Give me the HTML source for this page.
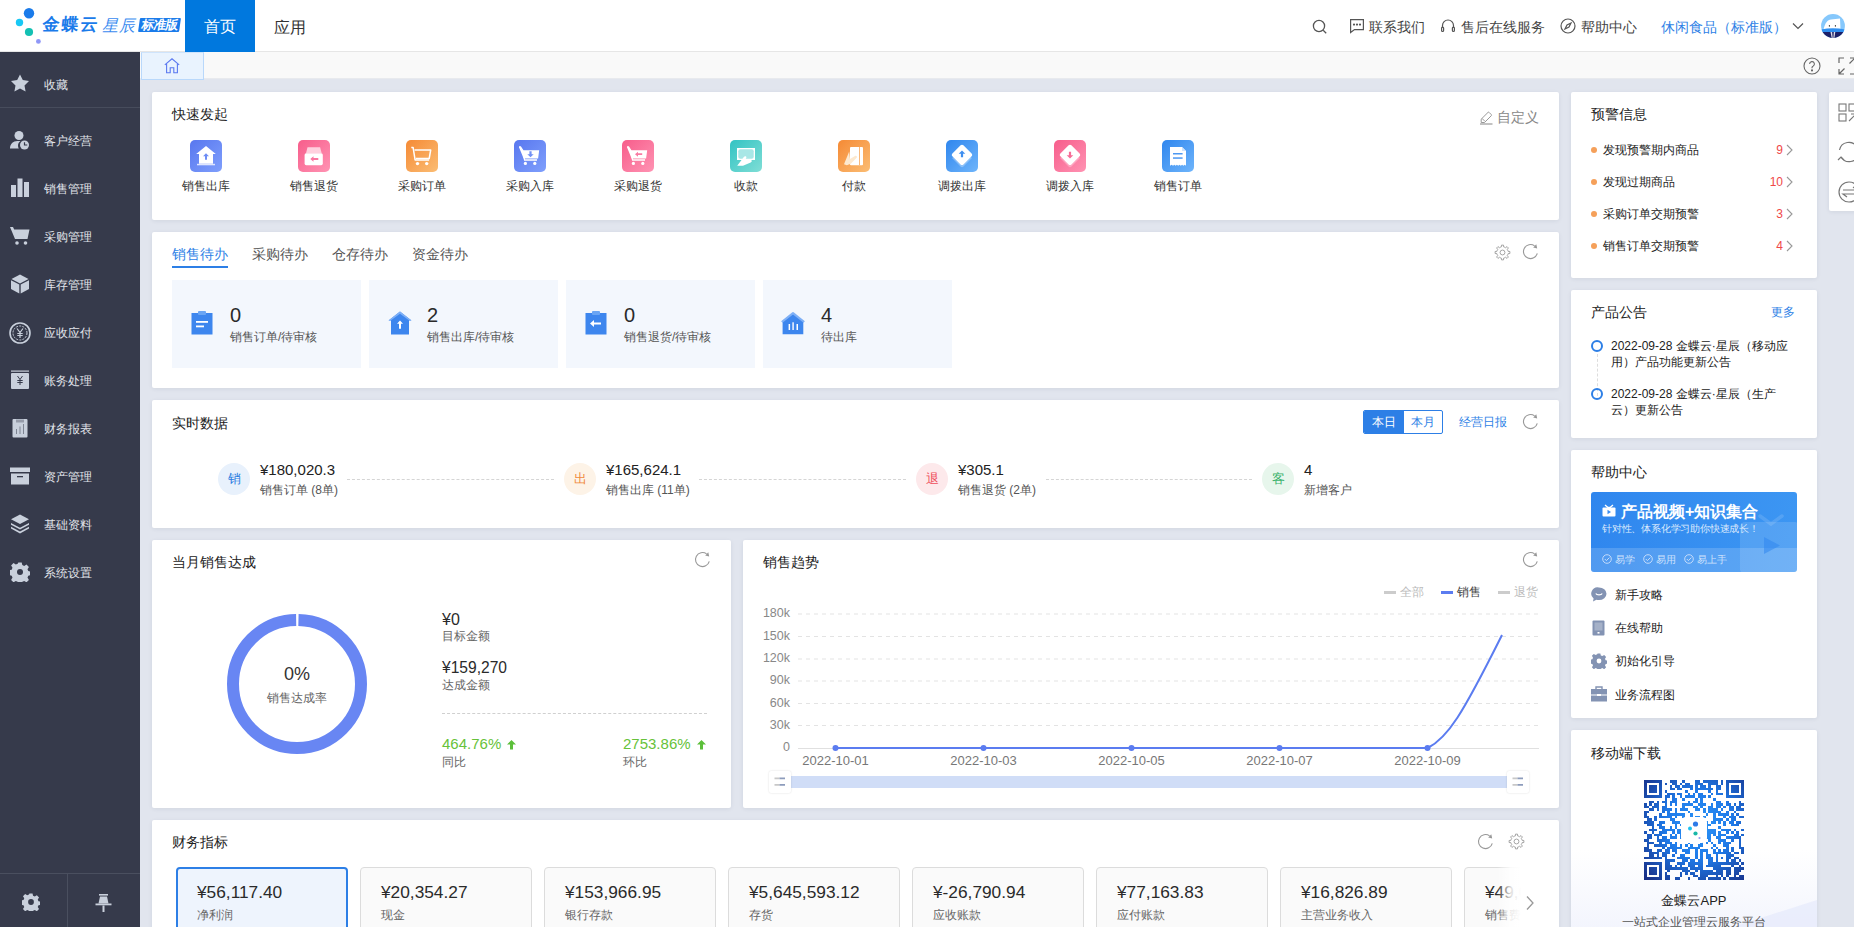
<!DOCTYPE html>
<html><head><meta charset="utf-8">
<style>
*{box-sizing:border-box;margin:0;padding:0}
html,body{width:1854px;height:927px;overflow:hidden}
body{position:relative;background:#e1e5ee;font-family:"Liberation Sans",sans-serif;color:#333;font-size:12px}
.a{position:absolute}
.hdr{left:0;top:0;width:1854px;height:52px;background:#fff;border-bottom:1px solid #e6e6e6}
.side{left:0;top:52px;width:140px;height:875px;background:#363a4b}
.si{position:absolute;left:0;width:140px;height:20px;color:#e1e4ea;font-size:12px;line-height:20px}
.si span{position:absolute;left:43.5px;top:0.8px;font-size:12.2px}
.si svg{position:absolute;left:10px;top:0px}
.tabbar{left:140px;top:52px;width:1714px;height:27px;background:#f9f9f9;border-bottom:1px solid #e8eaee}
.card{position:absolute;background:#fff;border-radius:2px;box-shadow:0 1px 4px rgba(30,40,70,.08)}
.ttl{position:absolute;left:20px;font-size:14px;color:#222;line-height:20px}
.ql{position:absolute;top:48px;width:70px;text-align:center;font-size:12px;color:#333}
.ql svg{display:block;margin:0 auto 6px}
.ql{line-height:16px}
</style></head><body>
<!-- header -->
<div class="a hdr">
 <svg class="a" style="left:0;top:0" width="44" height="52" viewBox="0 0 44 52">
  <circle cx="29" cy="13.3" r="5.2" fill="#1a7bea"/>
  <circle cx="19.5" cy="22.5" r="3.7" fill="#18c8f5"/>
  <circle cx="29" cy="32" r="4.1" fill="#13c0b3"/>
  <circle cx="38.4" cy="41.4" r="2.4" fill="#8f97f7"/>
 </svg>
 <div class="a" style="left:43px;top:15px;font-size:17px;line-height:20px;color:#1a7bea;font-weight:bold;letter-spacing:2px;transform:skewX(-6deg)">金蝶云</div>
 <div class="a" style="left:102px;top:16px;font-size:16px;line-height:20px;color:#3b8cf0;font-style:italic;letter-spacing:1px">星辰</div>
 <div class="a" style="left:139px;top:18px;width:41px;height:14px;background:#1a7bea;transform:skewX(-8deg);border-radius:1px"></div>
 <div class="a" style="left:139px;top:17px;width:42px;font-size:12.5px;line-height:16px;color:#fff;font-weight:bold;text-align:center;letter-spacing:-0.6px;transform:skewX(-10deg)">标准版</div>
 <div class="a" style="left:185px;top:0;width:70px;height:52px;background:#0078de;color:#fff;font-size:16px;line-height:54px;text-align:center">首页</div>
 <div class="a" style="left:255px;top:1px;width:70px;height:52px;color:#333;font-size:16px;line-height:54px;text-align:center">应用</div>
 <svg class="a" style="left:1312px;top:19px" width="16" height="16" viewBox="0 0 16 16" fill="none" stroke="#555" stroke-width="1.3"><circle cx="7" cy="7" r="5.6"/><path d="M11.2 11.2L14.2 14.2"/></svg>
 <svg class="a" style="left:1349px;top:18px" width="16" height="16" viewBox="0 0 16 16" fill="none" stroke="#555" stroke-width="1.2"><path d="M1.6 1.6h12.8v10H5.5L1.6 14.6z"/><circle cx="5" cy="6.6" r=".5" fill="#555"/><circle cx="8" cy="6.6" r=".5" fill="#555"/><circle cx="11" cy="6.6" r=".5" fill="#555"/></svg>
 <div class="a" style="left:1369px;top:17px;font-size:14px;line-height:20px;color:#444">联系我们</div>
 <svg class="a" style="left:1440px;top:18px" width="16" height="16" viewBox="0 0 16 16" fill="none" stroke="#555" stroke-width="1.2"><path d="M2.5 10V7.5a5.5 5.5 0 0 1 11 0V10"/><rect x="1.6" y="9" width="2" height="4.5" rx="1"/><rect x="12.4" y="9" width="2" height="4.5" rx="1"/></svg>
 <div class="a" style="left:1461px;top:17px;font-size:14px;line-height:20px;color:#444">售后在线服务</div>
 <svg class="a" style="left:1560px;top:18px" width="16" height="16" viewBox="0 0 16 16" fill="none" stroke="#555" stroke-width="1.2"><circle cx="8" cy="8" r="7"/><path d="M11 5L9 9 5 11 7 7z"/></svg>
 <div class="a" style="left:1581px;top:17px;font-size:14px;line-height:20px;color:#444">帮助中心</div>
 <div class="a" style="left:1661px;top:17px;font-size:14px;line-height:20px;color:#2d7fe6">休闲食品（标准版）</div>
 <svg class="a" style="left:1792px;top:20px" width="12" height="12" viewBox="0 0 12 12" fill="none" stroke="#555" stroke-width="1.2"><path d="M1 3.5l5 5 5-5"/></svg>
 <svg class="a" style="left:1821px;top:14px" width="24" height="24" viewBox="0 0 24 24">
  <defs><clipPath id="av"><circle cx="12" cy="12" r="11.9"/></clipPath></defs>
  <g clip-path="url(#av)"><rect width="24" height="24" fill="#86c8fc"/><path d="M2.5 15.5C4 9 6.5 6 10 5.6L19 4.6 19.5 15z" fill="#fff"/><path d="M0 15.5Q12 13 24 15.5V18.5H0z" fill="#2f8ff0"/><rect x="0" y="18" width="24" height="7" fill="#1c2068"/><path d="M9.5 18l1.2 6h1l-.6-6zM12.8 18l-.4 6h1l.9-6z" fill="#fff" opacity=".85"/></g>
  <ellipse cx="8.4" cy="11.8" rx=".6" ry=".9" fill="#333"/><ellipse cx="14.4" cy="11.8" rx=".6" ry=".9" fill="#333"/>
 </svg>
</div>
<div class="a side">
 <div class="si" style="top:22px"><svg width="20" height="18" viewBox="0 0 20 18"><path d="M10 0.5l2.8 5.6 6.2.9-4.5 4.4 1.1 6.1L10 14.6l-5.6 2.9 1.1-6.1L1 7l6.2-.9z" fill="#c9d0dc"/></svg><span>收藏</span></div>
 <div class="a" style="left:0;top:55px;width:140px;height:1px;background:#474c5c"></div>
 <div class="si" style="top:78px"><svg width="20" height="20" viewBox="0 0 20 20"><circle cx="9" cy="5.5" r="4.5" fill="#c9d0dc"/><path d="M0 18.5c0-4.5 3-7.5 7.5-7.5h3c-1.6 1-2.5 2.8-2.5 4.7 0 1.1.3 2 .8 2.8z" fill="#c9d0dc"/><circle cx="14.5" cy="15" r="4.5" fill="#c9d0dc"/><path d="M14.5 12.2v2.8h2.8" stroke="#363a4b" stroke-width="1.2" fill="none"/></svg><span>客户经营</span></div>
 <div class="si" style="top:126px"><svg width="20" height="20" viewBox="0 0 20 20"><rect x="1" y="7" width="5" height="12" fill="#c9d0dc"/><rect x="7.5" y="0.5" width="5" height="18.5" fill="#c9d0dc"/><rect x="14" y="4" width="5" height="15" fill="#c9d0dc"/></svg><span>销售管理</span></div>
 <div class="si" style="top:174px"><svg width="20" height="20" viewBox="0 0 20 20"><path d="M0 1h3l1.2 2.5H19.5l-2 9.5H5z" fill="#c9d0dc"/><circle cx="7" cy="17" r="1.8" fill="#c9d0dc"/><circle cx="15.5" cy="17" r="1.8" fill="#c9d0dc"/></svg><span>采购管理</span></div>
 <div class="si" style="top:222px"><svg width="20" height="20" viewBox="0 0 20 20"><path d="M10 0.5l8.5 4.5-8.5 4.5-8.5-4.5z" fill="#c9d0dc"/><path d="M1 6.2l8.3 4.4v9L1 15z" fill="#c9d0dc"/><path d="M19 6.2l-8.3 4.4v9L19 15z" fill="#c9d0dc"/></svg><span>库存管理</span></div>
 <div class="si" style="top:270px"><svg width="22" height="22" viewBox="0 0 22 22" style="left:9px;top:0"><circle cx="11" cy="11" r="10" fill="none" stroke="#c9d0dc" stroke-width="1.6"/><circle cx="11" cy="11" r="7" fill="none" stroke="#c9d0dc" stroke-width="1" stroke-dasharray="2 1.2"/><path d="M8 6.5l3 4 3-4M11 10.5V16M8.3 11.5h5.4M8.3 13.5h5.4" stroke="#c9d0dc" stroke-width="1.2" fill="none"/></svg><span>应收应付</span></div>
 <div class="si" style="top:318px"><svg width="20" height="20" viewBox="0 0 20 20"><rect x="1" y="0.5" width="18" height="1.2" fill="#c9d0dc"/><rect x="1" y="3" width="18" height="16" rx="1" fill="#c9d0dc"/><path d="M7.5 6l2.5 3.5 2.5-3.5M10 9.5V15M7.3 10.5h5.4M7.3 12.5h5.4" stroke="#363a4b" stroke-width="1" fill="none"/></svg><span>账务处理</span></div>
 <div class="si" style="top:366px"><svg width="20" height="20" viewBox="0 0 20 20"><rect x="2.5" y="1" width="15" height="18.5" rx="1" fill="#c9d0dc"/><path d="M6 1.5h8v3H6z" fill="#363a4b" opacity=".35"/><path d="M6.5 16V11M10 16V8.5M13.5 16V6" stroke="#363a4b" stroke-width="1" opacity=".5"/></svg><span>财务报表</span></div>
 <div class="si" style="top:414px"><svg width="20" height="20" viewBox="0 0 20 20"><rect x="0" y="1.5" width="20" height="4.5" fill="#c9d0dc"/><rect x="1" y="7.5" width="18" height="11" fill="#c9d0dc"/><rect x="7" y="10" width="6" height="1.3" fill="#363a4b"/></svg><span>资产管理</span></div>
 <div class="si" style="top:462px"><svg width="20" height="20" viewBox="0 0 20 20"><path d="M10 0.5l9 4.8-9 4.8-9-4.8z" fill="#c9d0dc"/><path d="M1 9l9 4.8L19 9v1.8l-9 4.8-9-4.8z" fill="#c9d0dc"/><path d="M1 12.8l9 4.8 9-4.8v1.8l-9 4.8-9-4.8z" fill="#c9d0dc"/></svg><span>基础资料</span></div>
 <div class="si" style="top:510px"><svg width="20" height="20" viewBox="0 0 20 20"><path fill="#c9d0dc" d="M8.3 0.5h3.4l.6 2.6 1.9.8 2.3-1.4 2.4 2.4-1.4 2.3.8 1.9 2.6.6v3.4l-2.6.6-.8 1.9 1.4 2.3-2.4 2.4-2.3-1.4-1.9.8-.6 2.6H8.3l-.6-2.6-1.9-.8-2.3 1.4-2.4-2.4 1.4-2.3-.8-1.9-2.6-.6V8.3l2.6-.6.8-1.9-1.4-2.3 2.4-2.4 2.3 1.4 1.9-.8z"/><circle cx="10" cy="10" r="3" fill="#363a4b"/></svg><span>系统设置</span></div>
 <div class="a" style="left:0;top:821px;width:140px;height:1px;background:#4a4f5f"></div>
 <div class="a" style="left:67px;top:821px;width:1px;height:54px;background:#4a4f5f"></div>
 <svg class="a" style="left:22px;top:841px" width="18" height="18" viewBox="0 0 20 20"><path fill="#c9d0dc" d="M8.3 0.5h3.4l.6 2.6 1.9.8 2.3-1.4 2.4 2.4-1.4 2.3.8 1.9 2.6.6v3.4l-2.6.6-.8 1.9 1.4 2.3-2.4 2.4-2.3-1.4-1.9.8-.6 2.6H8.3l-.6-2.6-1.9-.8-2.3 1.4-2.4-2.4 1.4-2.3-.8-1.9-2.6-.6V8.3l2.6-.6.8-1.9-1.4-2.3 2.4-2.4 2.3 1.4 1.9-.8z"/><circle cx="10" cy="10" r="3.2" fill="#363a4b"/></svg>
 <svg class="a" style="left:95px;top:841px" width="17" height="20" viewBox="0 0 17 20"><rect x="4" y="1" width="9" height="1.6" fill="#c9d0dc"/><path d="M5 3.5h7l1.5 7h-10z" fill="#c9d0dc"/><rect x="0.5" y="10.5" width="16" height="1.8" fill="#c9d0dc"/><rect x="7.5" y="12.5" width="2" height="6.5" fill="#c9d0dc"/></svg>
</div>
<div class="a tabbar">
 <div class="a" style="left:1px;top:0;width:63px;height:28px;background:#e9f3fe;border:1px solid #b9d8fb;border-top-color:#cfe4fc"></div>
 <svg class="a" style="left:24px;top:6px" width="16" height="16" viewBox="0 0 16 16" fill="none" stroke="#5a78f0" stroke-width="1.1"><path d="M0.8 6.8L8 0.8l7.2 6"/><path d="M2.6 5.8v9h3.6v-5h3.6v5h3.6v-9"/></svg>
 <svg class="a" style="left:1663px;top:5px" width="18" height="18" viewBox="0 0 18 18" fill="none" stroke="#666" stroke-width="1.1"><circle cx="9" cy="9" r="8"/><path d="M6.6 7a2.4 2.4 0 1 1 3.4 2.2c-.7.3-1 .8-1 1.5v.6"/><circle cx="9" cy="13.4" r=".5" fill="#666"/></svg>
 <svg class="a" style="left:1698px;top:5px" width="18" height="18" viewBox="0 0 18 18" fill="none" stroke="#666" stroke-width="1.2"><path d="M1 6V1h5M12 1h5v5M17 12v5h-5M6 17H1v-5M1.5 16.5l5-5M16.5 1.5l-5 5"/></svg>
</div>
<!-- cards -->
<div class="card" style="left:152px;top:92px;width:1407px;height:128px">
 <div class="ttl" style="top:12px">快速发起</div>
 <svg class="a" style="left:1327px;top:17px" width="16" height="16" viewBox="0 0 16 16" fill="none" stroke="#999" stroke-width="1"><path d="M2.2 10.2L9 3.4a.8.8 0 0 1 1.1 0l2.2 2.2a.8.8 0 0 1 0 1.1L5.5 13.5H2.2z"/><path d="M3 9.4l3 3"/><path d="M1 15h12.5" stroke-width="1.2"/></svg>
 <div class="a" style="left:1345px;top:15px;font-size:14px;line-height:20px;color:#888">自定义</div>
 <div class="ql" style="left:19px"><svg width="32" height="32" viewBox="0 0 32 32"><defs><linearGradient id="g1" x1="0" y1="0" x2="1" y2="1"><stop offset="0" stop-color="#5877ef"/><stop offset="1" stop-color="#7f9ffc"/></linearGradient></defs><rect width="32" height="32" rx="5" fill="url(#g1)"/><path d="M16 6l9.8 8H23v9.8H9V14H6.2z" fill="#fff"/><rect x="7" y="23.8" width="18" height="1.5" fill="#dfe6fd"/><path d="M16 13.2l-3 3h2v3.5h2v-3.5h2z" fill="#6d8cf5"/></svg>销售出库</div><div class="ql" style="left:127px"><svg width="32" height="32" viewBox="0 0 32 32"><defs><linearGradient id="g2" x1="0" y1="0" x2="1" y2="1"><stop offset="0" stop-color="#f75d8b"/><stop offset="1" stop-color="#ff93b3"/></linearGradient></defs><rect width="32" height="32" rx="5" fill="url(#g2)"/><path d="M9.5 7.2h12.6l1.6 6H8z" fill="#ffd0de"/><rect x="6.6" y="13.3" width="18.2" height="11.9" rx="1.6" fill="#fff"/><path d="M12.3 19l3.2-2.7v1.8h4.8v1.8h-4.8v1.8z" fill="#fa76a0"/></svg>销售退货</div><div class="ql" style="left:235px"><svg width="32" height="32" viewBox="0 0 32 32"><defs><linearGradient id="g3" x1="0" y1="0" x2="1" y2="1"><stop offset="0" stop-color="#f58a35"/><stop offset="1" stop-color="#fbbd74"/></linearGradient></defs><rect width="32" height="32" rx="5" fill="url(#g3)"/><path d="M5.3 7.4h1.8l2 12.6h14" fill="none" stroke="#fff" stroke-width="1.5" stroke-linejoin="round"/><path d="M8.5 10h16.2l-1.5 8.5H9.8" fill="none" stroke="#fff" stroke-width="1.5" stroke-linejoin="round"/><circle cx="11.5" cy="23.6" r="1.7" fill="#fff"/><circle cx="20.7" cy="23.6" r="1.7" fill="#fff"/></svg>采购订单</div><div class="ql" style="left:343px"><svg width="32" height="32" viewBox="0 0 32 32"><defs><linearGradient id="g4" x1="0" y1="0" x2="1" y2="1"><stop offset="0" stop-color="#5877ef"/><stop offset="1" stop-color="#7f9ffc"/></linearGradient></defs><rect width="32" height="32" rx="5" fill="url(#g4)"/><path d="M5 7.2h1.6l1.8 3H25.2l-1.1 8.3H9.6z" fill="#fff"/><path d="M5 7h1.5l2.2 3.2L10.6 20H23" fill="none" stroke="#fff" stroke-width="1.3"/><circle cx="11.4" cy="23.4" r="1.6" fill="#fff"/><circle cx="20.8" cy="23.4" r="1.6" fill="#fff"/><path d="M16.5 17.2l-3.2-3h2.1v-3h2.2v3h2.1z" fill="#7190f6"/></svg>采购入库</div><div class="ql" style="left:451px"><svg width="32" height="32" viewBox="0 0 32 32"><defs><linearGradient id="g5" x1="0" y1="0" x2="1" y2="1"><stop offset="0" stop-color="#f75d8b"/><stop offset="1" stop-color="#ff93b3"/></linearGradient></defs><rect width="32" height="32" rx="5" fill="url(#g5)"/><path d="M5 7.2h1.6l1.8 3H25.2l-1.1 8.3H9.6z" fill="#fff"/><path d="M5 7h1.5l2.2 3.2L10.6 20H23" fill="none" stroke="#fff" stroke-width="1.3"/><circle cx="11.4" cy="23.4" r="1.6" fill="#fff"/><circle cx="20.8" cy="23.4" r="1.6" fill="#fff"/><path d="M13 14.2l3-2.5v1.6h4.2v1.8H16v1.6z" fill="#f97aa3"/></svg>采购退货</div><div class="ql" style="left:559px"><svg width="32" height="32" viewBox="0 0 32 32"><defs><linearGradient id="g6" x1="0" y1="0" x2="1" y2="1"><stop offset="0" stop-color="#32c3c3"/><stop offset="1" stop-color="#80ded6"/></linearGradient></defs><rect width="32" height="32" rx="5" fill="url(#g6)"/><rect x="7" y="8" width="18" height="12" fill="#fff"/><rect x="8.3" y="9.3" width="15.4" height="9.4" rx="2" fill="#a8e7e6"/><path d="M7.2 25.8l6.8-9c.8-1 2.6-.6 2.4.8L15.2 20h5.6c1.4 0 1.4 2-.1 2.4L13 25.8z" fill="#fff"/></svg>收款</div><div class="ql" style="left:667px"><svg width="32" height="32" viewBox="0 0 32 32"><defs><linearGradient id="g7" x1="0" y1="0" x2="1" y2="1"><stop offset="0" stop-color="#f58a35"/><stop offset="1" stop-color="#fbbd74"/></linearGradient></defs><rect width="32" height="32" rx="5" fill="url(#g7)"/><rect x="12" y="7" width="13" height="18.2" rx="1" fill="#fff"/><rect x="21" y="7" width="0.9" height="18.2" fill="#f9b26e"/><path d="M6 24.3l5.2-12.8 0.8 7.5 5-3c1.5-.7 2.7.9 1.4 2l-5.6 5.8-4 1.5z" fill="#fde9cf"/></svg>付款</div><div class="ql" style="left:775px"><svg width="32" height="32" viewBox="0 0 32 32"><defs><linearGradient id="g8" x1="0" y1="0" x2="1" y2="1"><stop offset="0" stop-color="#2f86ee"/><stop offset="1" stop-color="#6fb5fb"/></linearGradient></defs><rect width="32" height="32" rx="5" fill="url(#g8)"/><path d="M16 11.5l10 6.5-8.5 8.6c-.8.8-2.2.8-3 0L6 18z" fill="#fff" opacity=".3"/><path d="M17.4 5.3l8.2 8.2c.8.8.8 2 0 2.8l-8.2 8.2c-.8.8-2 .8-2.8 0l-8.2-8.2c-.8-.8-.8-2 0-2.8l8.2-8.2c.8-.8 2-.8 2.8 0z" fill="#fff"/><path d="M16 10.5l-3.3 3.3h2.2v3.5h2.2v-3.5h2.2z" fill="#3f8ff0"/></svg>调拨出库</div><div class="ql" style="left:883px"><svg width="32" height="32" viewBox="0 0 32 32"><defs><linearGradient id="g9" x1="0" y1="0" x2="1" y2="1"><stop offset="0" stop-color="#f75d8b"/><stop offset="1" stop-color="#ff93b3"/></linearGradient></defs><rect width="32" height="32" rx="5" fill="url(#g9)"/><path d="M16 11.5l10 6.5-8.5 8.6c-.8.8-2.2.8-3 0L6 18z" fill="#fff" opacity=".3"/><path d="M17.4 5.3l8.2 8.2c.8.8.8 2 0 2.8l-8.2 8.2c-.8.8-2 .8-2.8 0l-8.2-8.2c-.8-.8-.8-2 0-2.8l8.2-8.2c.8-.8 2-.8 2.8 0z" fill="#fff"/><path d="M16 18.5l-3.3-3.3h2.2v-3.5h2.2v3.5h2.2z" fill="#f76d98"/></svg>调拨入库</div><div class="ql" style="left:991px"><svg width="32" height="32" viewBox="0 0 32 32"><defs><linearGradient id="g10" x1="0" y1="0" x2="1" y2="1"><stop offset="0" stop-color="#2f86ee"/><stop offset="1" stop-color="#6fb5fb"/></linearGradient></defs><rect width="32" height="32" rx="5" fill="url(#g10)"/><path d="M8 7h12l4 4v14.7l-1.3-.9-1.3.9-1.3-.9-1.3.9-1.3-.9-1.3.9-1.3-.9-1.3.9-1.3-.9-1.3.9-1.3-.9L8 25.7z" fill="#fff"/><path d="M20 7v4h4z" fill="#cfe3fc"/><rect x="11" y="13" width="9.6" height="1.5" fill="#4d98f2"/><rect x="11" y="17.3" width="9.6" height="1.5" fill="#4d98f2"/></svg>销售订单</div>
</div>
<div class="card" style="left:152px;top:232px;width:1407px;height:156px">
 <div class="a" style="left:20px;top:12px;font-size:14px;line-height:20px;color:#2d7fe6">销售待办</div>
 <div class="a" style="left:20px;top:34px;width:56px;height:2px;background:#2d7fe6"></div>
 <div class="a" style="left:100px;top:12px;font-size:14px;line-height:20px;color:#555">采购待办</div>
 <div class="a" style="left:180px;top:12px;font-size:14px;line-height:20px;color:#555">仓存待办</div>
 <div class="a" style="left:260px;top:12px;font-size:14px;line-height:20px;color:#555">资金待办</div>
 <svg class="a" style="left:1342px;top:12px" width="17" height="17" viewBox="-0.5 -0.5 21 21" fill="none" stroke="#999" stroke-width="1.1" stroke-linejoin="round"><path d="M16.47 7.32 L16.84 8.53 L19.12 8.78 L19.12 11.22 L16.84 11.47 L16.47 12.68 L15.88 13.80 L17.31 15.58 L15.58 17.31 L13.80 15.88 L12.68 16.47 L11.47 16.84 L11.22 19.12 L8.78 19.12 L8.53 16.84 L7.32 16.47 L6.20 15.88 L4.42 17.31 L2.69 15.58 L4.12 13.80 L3.53 12.68 L3.16 11.47 L0.88 11.22 L0.88 8.78 L3.16 8.53 L3.53 7.32 L4.12 6.20 L2.69 4.42 L4.42 2.69 L6.20 4.12 L7.32 3.53 L8.53 3.16 L8.78 0.88 L11.22 0.88 L11.47 3.16 L12.68 3.53 L13.80 4.12 L15.58 2.69 L17.31 4.42 L15.88 6.20z"/><circle cx="10" cy="10" r="3"/></svg>
 <svg class="a" style="left:1370px;top:11px" width="17" height="17" viewBox="0 0 17 17" fill="none" stroke="#999" stroke-width="1.1"><path d="M15.26 10.31A7 7 0 1 1 12.6 2.9"/><path d="M11.2 4.5L14.3 1.2 15.2 5.6z" fill="#999" stroke="none"/></svg>
 <div class="a" style="left:20px;top:48px;width:189px;height:88px;background:#f3f7fd"><svg class="a" style="left:19px;top:31px" width="22" height="24" viewBox="0 0 22 24"><rect x="0.5" y="2" width="21" height="21.5" fill="#3d86ee"/><rect x="7" y="0" width="8" height="4" rx="1" fill="#6aa5f4"/><rect x="5" y="10" width="12" height="1.8" fill="#fff"/><rect x="5" y="14.5" width="8" height="1.8" fill="#fff"/></svg><div class="a" style="left:58px;top:24px;font-size:20px;line-height:22px;color:#2a2a2a">0</div><div class="a" style="left:58px;top:49px;font-size:12px;line-height:16px;color:#555">销售订单/待审核</div></div>
 <div class="a" style="left:217px;top:48px;width:189px;height:88px;background:#f3f7fd"><svg class="a" style="left:19px;top:31px" width="24" height="24" viewBox="0 0 24 24"><path d="M12 0.5L23.5 9.5H21v14H3v-14H0.5z" fill="#3d86ee"/><path d="M12 0.5L23.5 9.5h-2.2L12 2.8 2.7 9.5H.5z" fill="#7fb0f6"/><path d="M12 9.5l-3 3.2h2v5h2v-5h2z" fill="#fff"/></svg><div class="a" style="left:58px;top:24px;font-size:20px;line-height:22px;color:#2a2a2a">2</div><div class="a" style="left:58px;top:49px;font-size:12px;line-height:16px;color:#555">销售出库/待审核</div></div>
 <div class="a" style="left:414px;top:48px;width:189px;height:88px;background:#f3f7fd"><svg class="a" style="left:19px;top:31px" width="22" height="24" viewBox="0 0 22 24"><rect x="0.5" y="2" width="21" height="21.5" fill="#3d86ee"/><rect x="7" y="0" width="8" height="4" rx="1" fill="#6aa5f4"/><path d="M5 12.5l4-3.5v2.5h7v2h-7v2.5z" fill="#fff"/></svg><div class="a" style="left:58px;top:24px;font-size:20px;line-height:22px;color:#2a2a2a">0</div><div class="a" style="left:58px;top:49px;font-size:12px;line-height:16px;color:#555">销售退货/待审核</div></div>
 <div class="a" style="left:611px;top:48px;width:189px;height:88px;background:#f3f7fd"><svg class="a" style="left:18px;top:30px" width="26" height="26" viewBox="0 0 26 26"><path d="M12 3.2L22.3 10.8V24.2H1.6V10.8z" fill="#3d86ee"/><path d="M0.8 12L12 3.2 23.2 12" fill="none" stroke="#7fb0f6" stroke-width="2.2" stroke-linejoin="round"/><rect x="7.6" y="14" width="1.5" height="6" fill="#fff"/><rect x="11.3" y="12.3" width="1.6" height="7.7" fill="#e8eefc"/><rect x="15.5" y="14" width="1.5" height="6" fill="#fff"/></svg><div class="a" style="left:58px;top:24px;font-size:20px;line-height:22px;color:#2a2a2a">4</div><div class="a" style="left:58px;top:49px;font-size:12px;line-height:16px;color:#555">待出库</div></div>
</div>
<div class="card" style="left:152px;top:400px;width:1407px;height:128px">
 <div class="ttl" style="top:13px">实时数据</div>
 <div class="a" style="left:1211px;top:10px;width:80px;height:24px;border:1px solid #2d7fe6;border-radius:2px;overflow:hidden">
  <div class="a" style="left:0;top:0;width:40px;height:22px;background:#2d7fe6;color:#fff;font-size:12px;line-height:22px;text-align:center">本日</div>
  <div class="a" style="left:40px;top:0;width:38px;height:22px;color:#2d7fe6;font-size:12px;line-height:22px;text-align:center">本月</div>
 </div>
 <div class="a" style="left:1307px;top:13px;font-size:12px;line-height:18px;color:#2d7fe6">经营日报</div>
 <svg class="a" style="left:1370px;top:13px" width="17" height="17" viewBox="0 0 17 17" fill="none" stroke="#999" stroke-width="1.1"><path d="M15.26 10.31A7 7 0 1 1 12.6 2.9"/><path d="M11.2 4.5L14.3 1.2 15.2 5.6z" fill="#999" stroke="none"/></svg>
 <div class="a" style="left:66px;top:63px;width:32px;height:32px;border-radius:50%;background:#e8f1fc;color:#2a7de1;font-size:13px;line-height:32px;text-align:center">销</div>
 <div class="a" style="left:108px;top:60px;font-size:15px;line-height:20px;color:#222">¥180,020.3</div>
 <div class="a" style="left:108px;top:82px;font-size:12px;line-height:16px;color:#555">销售订单 (8单)</div>
 <div class="a" style="left:195px;top:79px;width:207px;border-top:1px dashed #d5d5d5"></div>
 <div class="a" style="left:412px;top:63px;width:32px;height:32px;border-radius:50%;background:#fdf3e7;color:#f08a3c;font-size:13px;line-height:32px;text-align:center">出</div>
 <div class="a" style="left:454px;top:60px;font-size:15px;line-height:20px;color:#222">¥165,624.1</div>
 <div class="a" style="left:454px;top:82px;font-size:12px;line-height:16px;color:#555">销售出库 (11单)</div>
 <div class="a" style="left:547px;top:79px;width:207px;border-top:1px dashed #d5d5d5"></div>
 <div class="a" style="left:764px;top:63px;width:32px;height:32px;border-radius:50%;background:#fde9eb;color:#ef4f5c;font-size:13px;line-height:32px;text-align:center">退</div>
 <div class="a" style="left:806px;top:60px;font-size:15px;line-height:20px;color:#222">¥305.1</div>
 <div class="a" style="left:806px;top:82px;font-size:12px;line-height:16px;color:#555">销售退货 (2单)</div>
 <div class="a" style="left:894px;top:79px;width:206px;border-top:1px dashed #d5d5d5"></div>
 <div class="a" style="left:1110px;top:63px;width:32px;height:32px;border-radius:50%;background:#e7f6ec;color:#3bb26b;font-size:13px;line-height:32px;text-align:center">客</div>
 <div class="a" style="left:1152px;top:60px;font-size:15px;line-height:20px;color:#222">4</div>
 <div class="a" style="left:1152px;top:82px;font-size:12px;line-height:16px;color:#555">新增客户</div>
</div>
<div class="card" style="left:152px;top:540px;width:579px;height:268px">
 <div class="ttl" style="top:12px">当月销售达成</div>
 <svg class="a" style="left:542px;top:11px" width="17" height="17" viewBox="0 0 17 17" fill="none" stroke="#999" stroke-width="1.1"><path d="M15.26 10.31A7 7 0 1 1 12.6 2.9"/><path d="M11.2 4.5L14.3 1.2 15.2 5.6z" fill="#999" stroke="none"/></svg>
 <svg class="a" style="left:75px;top:74px" width="140" height="140" viewBox="0 0 140 140"><circle cx="70" cy="70" r="64" fill="none" stroke="#6886f3" stroke-width="12" stroke-dasharray="399.1 3" stroke-dashoffset="-1.5" transform="rotate(-90 70 70)"/></svg>
 <div class="a" style="left:75px;top:122px;width:140px;text-align:center;font-size:18px;line-height:24px;color:#333">0%</div>
 <div class="a" style="left:75px;top:150px;width:140px;text-align:center;font-size:12px;line-height:16px;color:#666">销售达成率</div>
 <div class="a" style="left:290px;top:70px;font-size:16px;line-height:20px;color:#2a2a2a">¥0</div>
 <div class="a" style="left:290px;top:88px;font-size:12px;line-height:16px;color:#666">目标金额</div>
 <div class="a" style="left:290px;top:118px;font-size:15.6px;line-height:20px;color:#2a2a2a">¥159,270</div>
 <div class="a" style="left:290px;top:137px;font-size:12px;line-height:16px;color:#666">达成金额</div>
 <div class="a" style="left:290px;top:173px;width:265px;border-top:1px dashed #d0d0d0"></div>
 <div class="a" style="left:290px;top:194px;font-size:15px;line-height:20px;color:#67c23a">464.76% <svg width="9" height="10" viewBox="0 0 9 10" style="vertical-align:-1px;margin-left:2px"><path d="M4.5 0L9 4.5H6v5H3v-5H0z" fill="#5cbf3a"/></svg></div>
 <div class="a" style="left:290px;top:214px;font-size:12px;line-height:16px;color:#666">同比</div>
 <div class="a" style="left:471px;top:194px;font-size:15px;line-height:20px;color:#67c23a">2753.86% <svg width="9" height="10" viewBox="0 0 9 10" style="vertical-align:-1px;margin-left:2px"><path d="M4.5 0L9 4.5H6v5H3v-5H0z" fill="#5cbf3a"/></svg></div>
 <div class="a" style="left:471px;top:214px;font-size:12px;line-height:16px;color:#666">环比</div>
</div>
<div class="card" style="left:743px;top:540px;width:816px;height:268px">
 <div class="ttl" style="top:12px">销售趋势</div>
 <svg class="a" style="left:779px;top:11px" width="17" height="17" viewBox="0 0 17 17" fill="none" stroke="#999" stroke-width="1.1"><path d="M15.26 10.31A7 7 0 1 1 12.6 2.9"/><path d="M11.2 4.5L14.3 1.2 15.2 5.6z" fill="#999" stroke="none"/></svg>
 <svg class="a" style="left:0;top:0" width="816" height="268" font-family="Liberation Sans, sans-serif">
  <line x1="55" y1="74" x2="796" y2="74" stroke="#e3e3e3" stroke-dasharray="4 4"/>
  <text x="47" y="77" text-anchor="end" font-size="12.5" fill="#888">180k</text>
  <line x1="55" y1="96.5" x2="796" y2="96.5" stroke="#e3e3e3" stroke-dasharray="4 4"/>
  <text x="47" y="99.5" text-anchor="end" font-size="12.5" fill="#888">150k</text>
  <line x1="55" y1="119" x2="796" y2="119" stroke="#e3e3e3" stroke-dasharray="4 4"/>
  <text x="47" y="122" text-anchor="end" font-size="12.5" fill="#888">120k</text>
  <line x1="55" y1="141" x2="796" y2="141" stroke="#e3e3e3" stroke-dasharray="4 4"/>
  <text x="47" y="144" text-anchor="end" font-size="12.5" fill="#888">90k</text>
  <line x1="55" y1="163.5" x2="796" y2="163.5" stroke="#e3e3e3" stroke-dasharray="4 4"/>
  <text x="47" y="166.5" text-anchor="end" font-size="12.5" fill="#888">60k</text>
  <line x1="55" y1="185.5" x2="796" y2="185.5" stroke="#e3e3e3" stroke-dasharray="4 4"/>
  <text x="47" y="188.5" text-anchor="end" font-size="12.5" fill="#888">30k</text>
  <line x1="55" y1="208.5" x2="796" y2="208.5" stroke="#e0e0e0"/>
  <text x="47" y="211" text-anchor="end" font-size="12.5" fill="#888">0</text>
  <text x="92.5" y="225" text-anchor="middle" font-size="13" fill="#777">2022-10-01</text>
  <text x="240.5" y="225" text-anchor="middle" font-size="13" fill="#777">2022-10-03</text>
  <text x="388.5" y="225" text-anchor="middle" font-size="13" fill="#777">2022-10-05</text>
  <text x="536.5" y="225" text-anchor="middle" font-size="13" fill="#777">2022-10-07</text>
  <text x="684.5" y="225" text-anchor="middle" font-size="13" fill="#777">2022-10-09</text>
  <path d="M92.5 208 L684.7 208 C704.7 198 719 175 759 95" fill="none" stroke="#5b7cf0" stroke-width="2"/>
  <circle cx="92.5" cy="208" r="3" fill="#5b7cf0"/>
  <circle cx="240.5" cy="208" r="3" fill="#5b7cf0"/>
  <circle cx="388.5" cy="208" r="3" fill="#5b7cf0"/>
  <circle cx="536.5" cy="208" r="3" fill="#5b7cf0"/>
  <circle cx="684.5" cy="208" r="3" fill="#5b7cf0"/>
  <rect x="47" y="236" width="717" height="12" fill="#d0ddf7"/>
 </svg>
 <div class="a" style="left:641px;top:51px;width:12px;height:3px;background:#ccc"></div>
 <div class="a" style="left:657px;top:44px;font-size:12px;line-height:16px;color:#bbb">全部</div>
 <div class="a" style="left:698px;top:51px;width:12px;height:3px;background:#5b7cf0"></div>
 <div class="a" style="left:714px;top:44px;font-size:12px;line-height:16px;color:#444">销售</div>
 <div class="a" style="left:755px;top:51px;width:12px;height:3px;background:#ccc"></div>
 <div class="a" style="left:771px;top:44px;font-size:12px;line-height:16px;color:#bbb">退货</div>
 <div class="a" style="left:26px;top:231px;width:22px;height:22px;background:#fff;border-radius:2px;box-shadow:0 0 2px rgba(0,0,0,.15)"><svg class="a" style="left:0;top:0" width="22" height="22" viewBox="0 0 22 22"><path d="M5.5 7.3h5M5.5 13.8h5" stroke="#c8c8c8" stroke-width="1.8"/><path d="M10.5 7.3h5.5M10.5 13.8h5.5" stroke="#8d9cbc" stroke-width="1.8"/></svg></div>
 <div class="a" style="left:764px;top:231px;width:22px;height:22px;background:#fff;border-radius:2px;box-shadow:0 0 2px rgba(0,0,0,.15)"><svg class="a" style="left:0;top:0" width="22" height="22" viewBox="0 0 22 22"><path d="M5.5 7.3h5M5.5 13.8h5" stroke="#c8c8c8" stroke-width="1.8"/><path d="M10.5 7.3h5.5M10.5 13.8h5.5" stroke="#8d9cbc" stroke-width="1.8"/></svg></div>
</div>
<div class="card" style="left:152px;top:820px;width:1407px;height:120px;overflow:hidden">
 <div class="ttl" style="top:12px">财务指标</div>
 <svg class="a" style="left:1325px;top:13px" width="17" height="17" viewBox="0 0 17 17" fill="none" stroke="#999" stroke-width="1.1"><path d="M15.26 10.31A7 7 0 1 1 12.6 2.9"/><path d="M11.2 4.5L14.3 1.2 15.2 5.6z" fill="#999" stroke="none"/></svg>
 <svg class="a" style="left:1356px;top:13px" width="17" height="17" viewBox="-0.5 -0.5 21 21" fill="none" stroke="#999" stroke-width="1.1" stroke-linejoin="round"><path d="M16.47 7.32 L16.84 8.53 L19.12 8.78 L19.12 11.22 L16.84 11.47 L16.47 12.68 L15.88 13.80 L17.31 15.58 L15.58 17.31 L13.80 15.88 L12.68 16.47 L11.47 16.84 L11.22 19.12 L8.78 19.12 L8.53 16.84 L7.32 16.47 L6.20 15.88 L4.42 17.31 L2.69 15.58 L4.12 13.80 L3.53 12.68 L3.16 11.47 L0.88 11.22 L0.88 8.78 L3.16 8.53 L3.53 7.32 L4.12 6.20 L2.69 4.42 L4.42 2.69 L6.20 4.12 L7.32 3.53 L8.53 3.16 L8.78 0.88 L11.22 0.88 L11.47 3.16 L12.68 3.53 L13.80 4.12 L15.58 2.69 L17.31 4.42 L15.88 6.20z"/><circle cx="10" cy="10" r="3"/></svg>
 <div class="a" style="left:1290px;top:40px;width:117px;height:90px;overflow:hidden">
 </div>
 <div class="a" style="left:24px;top:47px;width:172px;height:80px;border-radius:4px;background:#eef4fd;border:2px solid #2d7fe6"><div class="a" style="left:19px;top:12px;font-size:17.3px;line-height:22px;color:#2a2a2a;white-space:nowrap">¥56,117.40</div><div class="a" style="left:19px;top:38px;font-size:12px;line-height:16px;color:#666;white-space:nowrap">净利润</div></div><div class="a" style="left:208px;top:47px;width:172px;height:80px;border-radius:4px;background:#fafafa;border:1px solid #dcdcdc"><div class="a" style="left:20px;top:13px;font-size:17.3px;line-height:22px;color:#2a2a2a;white-space:nowrap">¥20,354.27</div><div class="a" style="left:20px;top:39px;font-size:12px;line-height:16px;color:#666;white-space:nowrap">现金</div></div><div class="a" style="left:392px;top:47px;width:172px;height:80px;border-radius:4px;background:#fafafa;border:1px solid #dcdcdc"><div class="a" style="left:20px;top:13px;font-size:17.3px;line-height:22px;color:#2a2a2a;white-space:nowrap">¥153,966.95</div><div class="a" style="left:20px;top:39px;font-size:12px;line-height:16px;color:#666;white-space:nowrap">银行存款</div></div><div class="a" style="left:576px;top:47px;width:172px;height:80px;border-radius:4px;background:#fafafa;border:1px solid #dcdcdc"><div class="a" style="left:20px;top:13px;font-size:17.3px;line-height:22px;color:#2a2a2a;white-space:nowrap">¥5,645,593.12</div><div class="a" style="left:20px;top:39px;font-size:12px;line-height:16px;color:#666;white-space:nowrap">存货</div></div><div class="a" style="left:760px;top:47px;width:172px;height:80px;border-radius:4px;background:#fafafa;border:1px solid #dcdcdc"><div class="a" style="left:20px;top:13px;font-size:17.3px;line-height:22px;color:#2a2a2a;white-space:nowrap">¥-26,790.94</div><div class="a" style="left:20px;top:39px;font-size:12px;line-height:16px;color:#666;white-space:nowrap">应收账款</div></div><div class="a" style="left:944px;top:47px;width:172px;height:80px;border-radius:4px;background:#fafafa;border:1px solid #dcdcdc"><div class="a" style="left:20px;top:13px;font-size:17.3px;line-height:22px;color:#2a2a2a;white-space:nowrap">¥77,163.83</div><div class="a" style="left:20px;top:39px;font-size:12px;line-height:16px;color:#666;white-space:nowrap">应付账款</div></div><div class="a" style="left:1128px;top:47px;width:172px;height:80px;border-radius:4px;background:#fafafa;border:1px solid #dcdcdc"><div class="a" style="left:20px;top:13px;font-size:17.3px;line-height:22px;color:#2a2a2a;white-space:nowrap">¥16,826.89</div><div class="a" style="left:20px;top:39px;font-size:12px;line-height:16px;color:#666;white-space:nowrap">主营业务收入</div></div><div class="a" style="left:1312px;top:47px;width:172px;height:80px;border-radius:4px;background:#fafafa;border:1px solid #dcdcdc"><div class="a" style="left:20px;top:13px;font-size:17.3px;line-height:22px;color:#2a2a2a;white-space:nowrap">¥49,000.00</div><div class="a" style="left:20px;top:39px;font-size:12px;line-height:16px;color:#666;white-space:nowrap">销售费用</div></div>
 <div class="a" style="left:1345px;top:40px;width:62px;height:90px;background:linear-gradient(to right, rgba(255,255,255,0) 0, rgba(255,255,255,.85) 14px, #fff 24px)"></div>
 <svg class="a" style="left:1373px;top:75px" width="10" height="16" viewBox="0 0 10 16" fill="none" stroke="#999" stroke-width="1.3"><path d="M2 1.5l6 6.5-6 6.5"/></svg>
</div>
<div class="card" style="left:1571px;top:92px;width:246px;height:186px">
 <div class="ttl" style="top:12px">预警信息</div>
 <div class="a" style="left:20px;top:55px;width:6px;height:6px;border-radius:50%;background:#f5a05a"></div>
 <div class="a" style="left:32px;top:50px;font-size:12px;line-height:16px;color:#222">发现预警期内商品</div>
 <div class="a" style="left:160px;top:50px;width:52px;text-align:right;font-size:12px;line-height:16px;color:#f04848">9</div>
 <svg class="a" style="left:215px;top:52px" width="7" height="12" viewBox="0 0 7 12" fill="none" stroke="#999" stroke-width="1.1"><path d="M1 1l5 5-5 5"/></svg>
 <div class="a" style="left:20px;top:87px;width:6px;height:6px;border-radius:50%;background:#f5a05a"></div>
 <div class="a" style="left:32px;top:82px;font-size:12px;line-height:16px;color:#222">发现过期商品</div>
 <div class="a" style="left:160px;top:82px;width:52px;text-align:right;font-size:12px;line-height:16px;color:#f04848">10</div>
 <svg class="a" style="left:215px;top:84px" width="7" height="12" viewBox="0 0 7 12" fill="none" stroke="#999" stroke-width="1.1"><path d="M1 1l5 5-5 5"/></svg>
 <div class="a" style="left:20px;top:119px;width:6px;height:6px;border-radius:50%;background:#f5a05a"></div>
 <div class="a" style="left:32px;top:114px;font-size:12px;line-height:16px;color:#222">采购订单交期预警</div>
 <div class="a" style="left:160px;top:114px;width:52px;text-align:right;font-size:12px;line-height:16px;color:#f04848">3</div>
 <svg class="a" style="left:215px;top:116px" width="7" height="12" viewBox="0 0 7 12" fill="none" stroke="#999" stroke-width="1.1"><path d="M1 1l5 5-5 5"/></svg>
 <div class="a" style="left:20px;top:151px;width:6px;height:6px;border-radius:50%;background:#f5a05a"></div>
 <div class="a" style="left:32px;top:146px;font-size:12px;line-height:16px;color:#222">销售订单交期预警</div>
 <div class="a" style="left:160px;top:146px;width:52px;text-align:right;font-size:12px;line-height:16px;color:#f04848">4</div>
 <svg class="a" style="left:215px;top:148px" width="7" height="12" viewBox="0 0 7 12" fill="none" stroke="#999" stroke-width="1.1"><path d="M1 1l5 5-5 5"/></svg>
</div>
<div class="card" style="left:1571px;top:290px;width:246px;height:148px">
 <div class="ttl" style="top:12px">产品公告</div>
 <div class="a" style="left:200px;top:14px;font-size:12px;line-height:16px;color:#2d7fe6">更多</div>
 <div class="a" style="left:20px;top:50px;width:12px;height:12px;border-radius:50%;border:2px solid #2d7fe6"></div>
 <div class="a" style="left:26px;top:64px;height:42px;border-left:1px dashed #ddd"></div>
 <div class="a" style="left:40px;top:48px;width:180px;font-size:12px;line-height:16px;color:#222">2022-09-28 金蝶云·星辰（移动应用）产品功能更新公告</div>
 <div class="a" style="left:20px;top:98px;width:12px;height:12px;border-radius:50%;border:2px solid #2d7fe6"></div>
 <div class="a" style="left:40px;top:96px;width:180px;font-size:12px;line-height:16px;color:#222">2022-09-28 金蝶云·星辰（生产云）更新公告</div>
</div>
<div class="card" style="left:1571px;top:450px;width:246px;height:268px">
 <div class="ttl" style="top:12px">帮助中心</div>
 <div class="a" style="left:20px;top:42px;width:206px;height:80px;background:linear-gradient(100deg,#2f86ee 0%,#3d97f3 100%);overflow:hidden;border-radius:3px">
  <div class="a" style="left:0;top:56px;width:206px;height:24px;background:rgba(255,255,255,.16)"></div>
  <svg class="a" style="left:148px;top:20px" width="58" height="60" viewBox="0 0 58 60"><rect x="1" y="10" width="60" height="52" rx="5" fill="#fff" opacity=".13"/><path d="M21 4l11 8 11-8" stroke="#fff" stroke-width="3.5" fill="none" opacity=".13" stroke-linecap="round"/><path d="M25 25l16 8.5-16 8.5z" fill="#2f86ee" opacity=".55"/></svg>
  <svg class="a" style="left:11px;top:12px" width="14" height="13" viewBox="0 0 14 13"><path d="M3 1l3 2.5h2L11 1" stroke="#fff" stroke-width="1.3" fill="none"/><rect x="0.5" y="3.5" width="13" height="9" rx="1" fill="#fff"/><path d="M5.5 5.8l3.5 2.2-3.5 2.2z" fill="#3a8cf0"/></svg>
  <div class="a" style="left:30px;top:10px;font-size:16px;line-height:20px;color:#fff;font-weight:bold;white-space:nowrap">产品视频+知识集合</div>
  <div class="a" style="left:11px;top:30px;font-size:10px;line-height:14px;color:#dceafd;white-space:nowrap;letter-spacing:-0.2px">针对性、体系化学习助你快速成长！</div>
  <div class="a" style="left:11px;top:62px;font-size:10px;line-height:12px;color:#cfe2fc;white-space:nowrap">
   <svg width="10" height="10" viewBox="0 0 10 10" style="vertical-align:-1px" fill="none" stroke="#cfe2fc" stroke-width=".9"><circle cx="5" cy="5" r="4.3"/><path d="M2.8 5l1.6 1.6 3-3"/></svg> 易学 &nbsp;
   <svg width="10" height="10" viewBox="0 0 10 10" style="vertical-align:-1px" fill="none" stroke="#cfe2fc" stroke-width=".9"><circle cx="5" cy="5" r="4.3"/><path d="M2.8 5l1.6 1.6 3-3"/></svg> 易用 &nbsp;
   <svg width="10" height="10" viewBox="0 0 10 10" style="vertical-align:-1px" fill="none" stroke="#cfe2fc" stroke-width=".9"><circle cx="5" cy="5" r="4.3"/><path d="M2.8 5l1.6 1.6 3-3"/></svg> 易上手
  </div>
 </div>
 <svg class="a" style="left:20px;top:137px" width="16" height="15" viewBox="0 0 16 15"><path d="M8 0.5a7.5 6.3 0 0 1 0 12.6c-.9 0-1.8-.1-2.6-.4L2 14.5l.6-3A6.3 6.3 0 0 1 8 .5z" fill="#8393b3"/><path d="M4.8 6.5c.8 1.8 5.6 1.8 6.4 0" stroke="#fff" stroke-width="1.2" fill="none"/></svg>
 <div class="a" style="left:44px;top:137px;font-size:12px;line-height:16px;color:#222">新手攻略</div>
 <svg class="a" style="left:21px;top:170px" width="13" height="16" viewBox="0 0 13 16"><rect x="0.5" y="0.5" width="12" height="15" rx="1" fill="#8393b3"/><rect x="2.5" y="2.5" width="8" height="8" fill="#a5b1c8"/><rect x="5.5" y="12" width="2" height="1.6" fill="#fff"/></svg>
 <div class="a" style="left:44px;top:170px;font-size:12px;line-height:16px;color:#222">在线帮助</div>
 <svg class="a" style="left:20px;top:203px" width="16" height="16" viewBox="0 0 20 20"><path fill="#8393b3" d="M8.3 0.5h3.4l.6 2.6 1.9.8 2.3-1.4 2.4 2.4-1.4 2.3.8 1.9 2.6.6v3.4l-2.6.6-.8 1.9 1.4 2.3-2.4 2.4-2.3-1.4-1.9.8-.6 2.6H8.3l-.6-2.6-1.9-.8-2.3 1.4-2.4-2.4 1.4-2.3-.8-1.9-2.6-.6V8.3l2.6-.6.8-1.9-1.4-2.3 2.4-2.4 2.3 1.4 1.9-.8z"/><circle cx="10" cy="10" r="3" fill="#fff"/></svg>
 <div class="a" style="left:44px;top:203px;font-size:12px;line-height:16px;color:#222">初始化引导</div>
 <svg class="a" style="left:20px;top:236px" width="16" height="16" viewBox="0 0 16 16"><path d="M5 3V1h6v2" stroke="#8393b3" stroke-width="1.4" fill="none"/><rect x="0" y="3" width="16" height="5.5" fill="#8393b3"/><rect x="0" y="9.5" width="16" height="6" fill="#8393b3"/><rect x="6" y="8" width="4" height="2" fill="#fff"/></svg>
 <div class="a" style="left:44px;top:237px;font-size:12px;line-height:16px;color:#222">业务流程图</div>
</div>
<div class="card" style="left:1571px;top:730px;width:246px;height:220px;overflow:hidden">
 <div class="a" style="left:0;top:120px;width:246px;height:100px;background:linear-gradient(180deg,rgba(255,255,255,0),rgba(236,239,252,.8))"></div>
 <svg class="a" style="left:90px;top:150px" width="156" height="70" viewBox="0 0 156 70"><path d="M0 70 L156 20 V70z" fill="#e6e9fb" opacity=".7"/></svg>
 <div class="ttl" style="top:13px">移动端下载</div>
 <svg class="a" style="left:73px;top:50px" width="100" height="100" viewBox="0 0 100 100" shape-rendering="crispEdges">
 <defs><radialGradient id="qg" cx=".55" cy=".45" r=".75"><stop offset="0" stop-color="#2a93f7"/><stop offset=".45" stop-color="#1f7ae8"/><stop offset="1" stop-color="#182f86"/></radialGradient></defs>
 <path d="M0.00 0.00h2.56v2.56h-2.56zM2.56 0.00h2.56v2.56h-2.56zM5.13 0.00h2.56v2.56h-2.56zM7.69 0.00h2.56v2.56h-2.56zM10.26 0.00h2.56v2.56h-2.56zM12.82 0.00h2.56v2.56h-2.56zM15.38 0.00h2.56v2.56h-2.56zM25.64 0.00h2.56v2.56h-2.56zM28.21 0.00h2.56v2.56h-2.56zM30.77 0.00h2.56v2.56h-2.56zM38.46 0.00h2.56v2.56h-2.56zM51.28 0.00h2.56v2.56h-2.56zM53.85 0.00h2.56v2.56h-2.56zM58.97 0.00h2.56v2.56h-2.56zM61.54 0.00h2.56v2.56h-2.56zM64.10 0.00h2.56v2.56h-2.56zM66.67 0.00h2.56v2.56h-2.56zM69.23 0.00h2.56v2.56h-2.56zM71.79 0.00h2.56v2.56h-2.56zM76.92 0.00h2.56v2.56h-2.56zM82.05 0.00h2.56v2.56h-2.56zM84.62 0.00h2.56v2.56h-2.56zM87.18 0.00h2.56v2.56h-2.56zM89.74 0.00h2.56v2.56h-2.56zM92.31 0.00h2.56v2.56h-2.56zM94.87 0.00h2.56v2.56h-2.56zM97.44 0.00h2.56v2.56h-2.56zM0.00 2.56h2.56v2.56h-2.56zM15.38 2.56h2.56v2.56h-2.56zM20.51 2.56h2.56v2.56h-2.56zM28.21 2.56h2.56v2.56h-2.56zM30.77 2.56h2.56v2.56h-2.56zM35.90 2.56h2.56v2.56h-2.56zM41.03 2.56h2.56v2.56h-2.56zM43.59 2.56h2.56v2.56h-2.56zM51.28 2.56h2.56v2.56h-2.56zM53.85 2.56h2.56v2.56h-2.56zM56.41 2.56h2.56v2.56h-2.56zM64.10 2.56h2.56v2.56h-2.56zM66.67 2.56h2.56v2.56h-2.56zM69.23 2.56h2.56v2.56h-2.56zM71.79 2.56h2.56v2.56h-2.56zM76.92 2.56h2.56v2.56h-2.56zM82.05 2.56h2.56v2.56h-2.56zM97.44 2.56h2.56v2.56h-2.56zM0.00 5.13h2.56v2.56h-2.56zM5.13 5.13h2.56v2.56h-2.56zM7.69 5.13h2.56v2.56h-2.56zM10.26 5.13h2.56v2.56h-2.56zM15.38 5.13h2.56v2.56h-2.56zM25.64 5.13h2.56v2.56h-2.56zM30.77 5.13h2.56v2.56h-2.56zM33.33 5.13h2.56v2.56h-2.56zM38.46 5.13h2.56v2.56h-2.56zM41.03 5.13h2.56v2.56h-2.56zM43.59 5.13h2.56v2.56h-2.56zM46.15 5.13h2.56v2.56h-2.56zM51.28 5.13h2.56v2.56h-2.56zM56.41 5.13h2.56v2.56h-2.56zM58.97 5.13h2.56v2.56h-2.56zM64.10 5.13h2.56v2.56h-2.56zM71.79 5.13h2.56v2.56h-2.56zM74.36 5.13h2.56v2.56h-2.56zM82.05 5.13h2.56v2.56h-2.56zM87.18 5.13h2.56v2.56h-2.56zM89.74 5.13h2.56v2.56h-2.56zM92.31 5.13h2.56v2.56h-2.56zM97.44 5.13h2.56v2.56h-2.56zM0.00 7.69h2.56v2.56h-2.56zM5.13 7.69h2.56v2.56h-2.56zM7.69 7.69h2.56v2.56h-2.56zM10.26 7.69h2.56v2.56h-2.56zM15.38 7.69h2.56v2.56h-2.56zM25.64 7.69h2.56v2.56h-2.56zM28.21 7.69h2.56v2.56h-2.56zM33.33 7.69h2.56v2.56h-2.56zM35.90 7.69h2.56v2.56h-2.56zM46.15 7.69h2.56v2.56h-2.56zM51.28 7.69h2.56v2.56h-2.56zM53.85 7.69h2.56v2.56h-2.56zM56.41 7.69h2.56v2.56h-2.56zM58.97 7.69h2.56v2.56h-2.56zM61.54 7.69h2.56v2.56h-2.56zM64.10 7.69h2.56v2.56h-2.56zM66.67 7.69h2.56v2.56h-2.56zM71.79 7.69h2.56v2.56h-2.56zM74.36 7.69h2.56v2.56h-2.56zM82.05 7.69h2.56v2.56h-2.56zM87.18 7.69h2.56v2.56h-2.56zM89.74 7.69h2.56v2.56h-2.56zM92.31 7.69h2.56v2.56h-2.56zM97.44 7.69h2.56v2.56h-2.56zM0.00 10.26h2.56v2.56h-2.56zM5.13 10.26h2.56v2.56h-2.56zM7.69 10.26h2.56v2.56h-2.56zM10.26 10.26h2.56v2.56h-2.56zM15.38 10.26h2.56v2.56h-2.56zM20.51 10.26h2.56v2.56h-2.56zM41.03 10.26h2.56v2.56h-2.56zM51.28 10.26h2.56v2.56h-2.56zM64.10 10.26h2.56v2.56h-2.56zM71.79 10.26h2.56v2.56h-2.56zM82.05 10.26h2.56v2.56h-2.56zM87.18 10.26h2.56v2.56h-2.56zM89.74 10.26h2.56v2.56h-2.56zM92.31 10.26h2.56v2.56h-2.56zM97.44 10.26h2.56v2.56h-2.56zM0.00 12.82h2.56v2.56h-2.56zM15.38 12.82h2.56v2.56h-2.56zM23.08 12.82h2.56v2.56h-2.56zM25.64 12.82h2.56v2.56h-2.56zM28.21 12.82h2.56v2.56h-2.56zM33.33 12.82h2.56v2.56h-2.56zM35.90 12.82h2.56v2.56h-2.56zM43.59 12.82h2.56v2.56h-2.56zM48.72 12.82h2.56v2.56h-2.56zM53.85 12.82h2.56v2.56h-2.56zM56.41 12.82h2.56v2.56h-2.56zM66.67 12.82h2.56v2.56h-2.56zM71.79 12.82h2.56v2.56h-2.56zM74.36 12.82h2.56v2.56h-2.56zM76.92 12.82h2.56v2.56h-2.56zM82.05 12.82h2.56v2.56h-2.56zM97.44 12.82h2.56v2.56h-2.56zM0.00 15.38h2.56v2.56h-2.56zM2.56 15.38h2.56v2.56h-2.56zM5.13 15.38h2.56v2.56h-2.56zM7.69 15.38h2.56v2.56h-2.56zM10.26 15.38h2.56v2.56h-2.56zM12.82 15.38h2.56v2.56h-2.56zM15.38 15.38h2.56v2.56h-2.56zM20.51 15.38h2.56v2.56h-2.56zM23.08 15.38h2.56v2.56h-2.56zM28.21 15.38h2.56v2.56h-2.56zM35.90 15.38h2.56v2.56h-2.56zM41.03 15.38h2.56v2.56h-2.56zM43.59 15.38h2.56v2.56h-2.56zM46.15 15.38h2.56v2.56h-2.56zM48.72 15.38h2.56v2.56h-2.56zM53.85 15.38h2.56v2.56h-2.56zM56.41 15.38h2.56v2.56h-2.56zM58.97 15.38h2.56v2.56h-2.56zM64.10 15.38h2.56v2.56h-2.56zM82.05 15.38h2.56v2.56h-2.56zM84.62 15.38h2.56v2.56h-2.56zM87.18 15.38h2.56v2.56h-2.56zM89.74 15.38h2.56v2.56h-2.56zM92.31 15.38h2.56v2.56h-2.56zM94.87 15.38h2.56v2.56h-2.56zM97.44 15.38h2.56v2.56h-2.56zM20.51 17.95h2.56v2.56h-2.56zM28.21 17.95h2.56v2.56h-2.56zM30.77 17.95h2.56v2.56h-2.56zM38.46 17.95h2.56v2.56h-2.56zM51.28 17.95h2.56v2.56h-2.56zM56.41 17.95h2.56v2.56h-2.56zM69.23 17.95h2.56v2.56h-2.56zM5.13 20.51h2.56v2.56h-2.56zM7.69 20.51h2.56v2.56h-2.56zM12.82 20.51h2.56v2.56h-2.56zM17.95 20.51h2.56v2.56h-2.56zM20.51 20.51h2.56v2.56h-2.56zM25.64 20.51h2.56v2.56h-2.56zM28.21 20.51h2.56v2.56h-2.56zM30.77 20.51h2.56v2.56h-2.56zM43.59 20.51h2.56v2.56h-2.56zM48.72 20.51h2.56v2.56h-2.56zM51.28 20.51h2.56v2.56h-2.56zM56.41 20.51h2.56v2.56h-2.56zM71.79 20.51h2.56v2.56h-2.56zM74.36 20.51h2.56v2.56h-2.56zM82.05 20.51h2.56v2.56h-2.56zM94.87 20.51h2.56v2.56h-2.56zM0.00 23.08h2.56v2.56h-2.56zM5.13 23.08h2.56v2.56h-2.56zM10.26 23.08h2.56v2.56h-2.56zM12.82 23.08h2.56v2.56h-2.56zM20.51 23.08h2.56v2.56h-2.56zM25.64 23.08h2.56v2.56h-2.56zM30.77 23.08h2.56v2.56h-2.56zM38.46 23.08h2.56v2.56h-2.56zM41.03 23.08h2.56v2.56h-2.56zM43.59 23.08h2.56v2.56h-2.56zM46.15 23.08h2.56v2.56h-2.56zM53.85 23.08h2.56v2.56h-2.56zM56.41 23.08h2.56v2.56h-2.56zM58.97 23.08h2.56v2.56h-2.56zM66.67 23.08h2.56v2.56h-2.56zM71.79 23.08h2.56v2.56h-2.56zM74.36 23.08h2.56v2.56h-2.56zM76.92 23.08h2.56v2.56h-2.56zM82.05 23.08h2.56v2.56h-2.56zM84.62 23.08h2.56v2.56h-2.56zM89.74 23.08h2.56v2.56h-2.56zM94.87 23.08h2.56v2.56h-2.56zM97.44 23.08h2.56v2.56h-2.56zM0.00 25.64h2.56v2.56h-2.56zM2.56 25.64h2.56v2.56h-2.56zM7.69 25.64h2.56v2.56h-2.56zM10.26 25.64h2.56v2.56h-2.56zM12.82 25.64h2.56v2.56h-2.56zM17.95 25.64h2.56v2.56h-2.56zM20.51 25.64h2.56v2.56h-2.56zM38.46 25.64h2.56v2.56h-2.56zM48.72 25.64h2.56v2.56h-2.56zM51.28 25.64h2.56v2.56h-2.56zM56.41 25.64h2.56v2.56h-2.56zM64.10 25.64h2.56v2.56h-2.56zM66.67 25.64h2.56v2.56h-2.56zM71.79 25.64h2.56v2.56h-2.56zM74.36 25.64h2.56v2.56h-2.56zM79.49 25.64h2.56v2.56h-2.56zM84.62 25.64h2.56v2.56h-2.56zM87.18 25.64h2.56v2.56h-2.56zM92.31 25.64h2.56v2.56h-2.56zM94.87 25.64h2.56v2.56h-2.56zM5.13 28.21h2.56v2.56h-2.56zM7.69 28.21h2.56v2.56h-2.56zM12.82 28.21h2.56v2.56h-2.56zM17.95 28.21h2.56v2.56h-2.56zM20.51 28.21h2.56v2.56h-2.56zM23.08 28.21h2.56v2.56h-2.56zM25.64 28.21h2.56v2.56h-2.56zM30.77 28.21h2.56v2.56h-2.56zM35.90 28.21h2.56v2.56h-2.56zM38.46 28.21h2.56v2.56h-2.56zM41.03 28.21h2.56v2.56h-2.56zM51.28 28.21h2.56v2.56h-2.56zM53.85 28.21h2.56v2.56h-2.56zM58.97 28.21h2.56v2.56h-2.56zM64.10 28.21h2.56v2.56h-2.56zM66.67 28.21h2.56v2.56h-2.56zM69.23 28.21h2.56v2.56h-2.56zM71.79 28.21h2.56v2.56h-2.56zM76.92 28.21h2.56v2.56h-2.56zM84.62 28.21h2.56v2.56h-2.56zM87.18 28.21h2.56v2.56h-2.56zM92.31 28.21h2.56v2.56h-2.56zM94.87 28.21h2.56v2.56h-2.56zM97.44 28.21h2.56v2.56h-2.56zM0.00 30.77h2.56v2.56h-2.56zM2.56 30.77h2.56v2.56h-2.56zM17.95 30.77h2.56v2.56h-2.56zM23.08 30.77h2.56v2.56h-2.56zM30.77 30.77h2.56v2.56h-2.56zM43.59 30.77h2.56v2.56h-2.56zM58.97 30.77h2.56v2.56h-2.56zM64.10 30.77h2.56v2.56h-2.56zM66.67 30.77h2.56v2.56h-2.56zM69.23 30.77h2.56v2.56h-2.56zM71.79 30.77h2.56v2.56h-2.56zM74.36 30.77h2.56v2.56h-2.56zM82.05 30.77h2.56v2.56h-2.56zM89.74 30.77h2.56v2.56h-2.56zM0.00 33.33h2.56v2.56h-2.56zM15.38 33.33h2.56v2.56h-2.56zM23.08 33.33h2.56v2.56h-2.56zM25.64 33.33h2.56v2.56h-2.56zM28.21 33.33h2.56v2.56h-2.56zM30.77 33.33h2.56v2.56h-2.56zM33.33 33.33h2.56v2.56h-2.56zM35.90 33.33h2.56v2.56h-2.56zM38.46 33.33h2.56v2.56h-2.56zM46.15 33.33h2.56v2.56h-2.56zM61.54 33.33h2.56v2.56h-2.56zM69.23 33.33h2.56v2.56h-2.56zM74.36 33.33h2.56v2.56h-2.56zM76.92 33.33h2.56v2.56h-2.56zM79.49 33.33h2.56v2.56h-2.56zM82.05 33.33h2.56v2.56h-2.56zM87.18 33.33h2.56v2.56h-2.56zM92.31 33.33h2.56v2.56h-2.56zM0.00 35.90h2.56v2.56h-2.56zM2.56 35.90h2.56v2.56h-2.56zM10.26 35.90h2.56v2.56h-2.56zM15.38 35.90h2.56v2.56h-2.56zM17.95 35.90h2.56v2.56h-2.56zM20.51 35.90h2.56v2.56h-2.56zM23.08 35.90h2.56v2.56h-2.56zM25.64 35.90h2.56v2.56h-2.56zM30.77 35.90h2.56v2.56h-2.56zM38.46 35.90h2.56v2.56h-2.56zM46.15 35.90h2.56v2.56h-2.56zM51.28 35.90h2.56v2.56h-2.56zM53.85 35.90h2.56v2.56h-2.56zM58.97 35.90h2.56v2.56h-2.56zM69.23 35.90h2.56v2.56h-2.56zM79.49 35.90h2.56v2.56h-2.56zM84.62 35.90h2.56v2.56h-2.56zM87.18 35.90h2.56v2.56h-2.56zM89.74 35.90h2.56v2.56h-2.56zM94.87 35.90h2.56v2.56h-2.56zM97.44 35.90h2.56v2.56h-2.56zM2.56 38.46h2.56v2.56h-2.56zM5.13 38.46h2.56v2.56h-2.56zM10.26 38.46h2.56v2.56h-2.56zM25.64 38.46h2.56v2.56h-2.56zM28.21 38.46h2.56v2.56h-2.56zM69.23 38.46h2.56v2.56h-2.56zM71.79 38.46h2.56v2.56h-2.56zM74.36 38.46h2.56v2.56h-2.56zM76.92 38.46h2.56v2.56h-2.56zM82.05 38.46h2.56v2.56h-2.56zM87.18 38.46h2.56v2.56h-2.56zM89.74 38.46h2.56v2.56h-2.56zM0.00 41.03h2.56v2.56h-2.56zM2.56 41.03h2.56v2.56h-2.56zM5.13 41.03h2.56v2.56h-2.56zM7.69 41.03h2.56v2.56h-2.56zM15.38 41.03h2.56v2.56h-2.56zM17.95 41.03h2.56v2.56h-2.56zM28.21 41.03h2.56v2.56h-2.56zM30.77 41.03h2.56v2.56h-2.56zM33.33 41.03h2.56v2.56h-2.56zM61.54 41.03h2.56v2.56h-2.56zM66.67 41.03h2.56v2.56h-2.56zM69.23 41.03h2.56v2.56h-2.56zM74.36 41.03h2.56v2.56h-2.56zM79.49 41.03h2.56v2.56h-2.56zM84.62 41.03h2.56v2.56h-2.56zM87.18 41.03h2.56v2.56h-2.56zM92.31 41.03h2.56v2.56h-2.56zM94.87 41.03h2.56v2.56h-2.56zM2.56 43.59h2.56v2.56h-2.56zM5.13 43.59h2.56v2.56h-2.56zM7.69 43.59h2.56v2.56h-2.56zM12.82 43.59h2.56v2.56h-2.56zM15.38 43.59h2.56v2.56h-2.56zM30.77 43.59h2.56v2.56h-2.56zM35.90 43.59h2.56v2.56h-2.56zM61.54 43.59h2.56v2.56h-2.56zM64.10 43.59h2.56v2.56h-2.56zM79.49 43.59h2.56v2.56h-2.56zM87.18 43.59h2.56v2.56h-2.56zM89.74 43.59h2.56v2.56h-2.56zM92.31 43.59h2.56v2.56h-2.56zM7.69 46.15h2.56v2.56h-2.56zM15.38 46.15h2.56v2.56h-2.56zM17.95 46.15h2.56v2.56h-2.56zM25.64 46.15h2.56v2.56h-2.56zM30.77 46.15h2.56v2.56h-2.56zM61.54 46.15h2.56v2.56h-2.56zM74.36 46.15h2.56v2.56h-2.56zM5.13 48.72h2.56v2.56h-2.56zM7.69 48.72h2.56v2.56h-2.56zM10.26 48.72h2.56v2.56h-2.56zM17.95 48.72h2.56v2.56h-2.56zM20.51 48.72h2.56v2.56h-2.56zM23.08 48.72h2.56v2.56h-2.56zM25.64 48.72h2.56v2.56h-2.56zM28.21 48.72h2.56v2.56h-2.56zM33.33 48.72h2.56v2.56h-2.56zM35.90 48.72h2.56v2.56h-2.56zM61.54 48.72h2.56v2.56h-2.56zM64.10 48.72h2.56v2.56h-2.56zM66.67 48.72h2.56v2.56h-2.56zM69.23 48.72h2.56v2.56h-2.56zM76.92 48.72h2.56v2.56h-2.56zM79.49 48.72h2.56v2.56h-2.56zM82.05 48.72h2.56v2.56h-2.56zM84.62 48.72h2.56v2.56h-2.56zM89.74 48.72h2.56v2.56h-2.56zM97.44 48.72h2.56v2.56h-2.56zM0.00 51.28h2.56v2.56h-2.56zM7.69 51.28h2.56v2.56h-2.56zM15.38 51.28h2.56v2.56h-2.56zM17.95 51.28h2.56v2.56h-2.56zM20.51 51.28h2.56v2.56h-2.56zM28.21 51.28h2.56v2.56h-2.56zM33.33 51.28h2.56v2.56h-2.56zM35.90 51.28h2.56v2.56h-2.56zM61.54 51.28h2.56v2.56h-2.56zM64.10 51.28h2.56v2.56h-2.56zM66.67 51.28h2.56v2.56h-2.56zM69.23 51.28h2.56v2.56h-2.56zM74.36 51.28h2.56v2.56h-2.56zM82.05 51.28h2.56v2.56h-2.56zM87.18 51.28h2.56v2.56h-2.56zM92.31 51.28h2.56v2.56h-2.56zM2.56 53.85h2.56v2.56h-2.56zM5.13 53.85h2.56v2.56h-2.56zM10.26 53.85h2.56v2.56h-2.56zM12.82 53.85h2.56v2.56h-2.56zM15.38 53.85h2.56v2.56h-2.56zM25.64 53.85h2.56v2.56h-2.56zM30.77 53.85h2.56v2.56h-2.56zM35.90 53.85h2.56v2.56h-2.56zM61.54 53.85h2.56v2.56h-2.56zM64.10 53.85h2.56v2.56h-2.56zM69.23 53.85h2.56v2.56h-2.56zM74.36 53.85h2.56v2.56h-2.56zM76.92 53.85h2.56v2.56h-2.56zM79.49 53.85h2.56v2.56h-2.56zM89.74 53.85h2.56v2.56h-2.56zM92.31 53.85h2.56v2.56h-2.56zM97.44 53.85h2.56v2.56h-2.56zM2.56 56.41h2.56v2.56h-2.56zM5.13 56.41h2.56v2.56h-2.56zM12.82 56.41h2.56v2.56h-2.56zM17.95 56.41h2.56v2.56h-2.56zM20.51 56.41h2.56v2.56h-2.56zM25.64 56.41h2.56v2.56h-2.56zM28.21 56.41h2.56v2.56h-2.56zM30.77 56.41h2.56v2.56h-2.56zM35.90 56.41h2.56v2.56h-2.56zM61.54 56.41h2.56v2.56h-2.56zM64.10 56.41h2.56v2.56h-2.56zM71.79 56.41h2.56v2.56h-2.56zM74.36 56.41h2.56v2.56h-2.56zM82.05 56.41h2.56v2.56h-2.56zM84.62 56.41h2.56v2.56h-2.56zM87.18 56.41h2.56v2.56h-2.56zM89.74 56.41h2.56v2.56h-2.56zM92.31 56.41h2.56v2.56h-2.56zM94.87 56.41h2.56v2.56h-2.56zM0.00 58.97h2.56v2.56h-2.56zM2.56 58.97h2.56v2.56h-2.56zM12.82 58.97h2.56v2.56h-2.56zM15.38 58.97h2.56v2.56h-2.56zM17.95 58.97h2.56v2.56h-2.56zM20.51 58.97h2.56v2.56h-2.56zM23.08 58.97h2.56v2.56h-2.56zM64.10 58.97h2.56v2.56h-2.56zM74.36 58.97h2.56v2.56h-2.56zM76.92 58.97h2.56v2.56h-2.56zM79.49 58.97h2.56v2.56h-2.56zM87.18 58.97h2.56v2.56h-2.56zM94.87 58.97h2.56v2.56h-2.56zM2.56 61.54h2.56v2.56h-2.56zM5.13 61.54h2.56v2.56h-2.56zM7.69 61.54h2.56v2.56h-2.56zM15.38 61.54h2.56v2.56h-2.56zM20.51 61.54h2.56v2.56h-2.56zM23.08 61.54h2.56v2.56h-2.56zM25.64 61.54h2.56v2.56h-2.56zM30.77 61.54h2.56v2.56h-2.56zM43.59 61.54h2.56v2.56h-2.56zM56.41 61.54h2.56v2.56h-2.56zM61.54 61.54h2.56v2.56h-2.56zM66.67 61.54h2.56v2.56h-2.56zM74.36 61.54h2.56v2.56h-2.56zM79.49 61.54h2.56v2.56h-2.56zM82.05 61.54h2.56v2.56h-2.56zM84.62 61.54h2.56v2.56h-2.56zM94.87 61.54h2.56v2.56h-2.56zM2.56 64.10h2.56v2.56h-2.56zM10.26 64.10h2.56v2.56h-2.56zM12.82 64.10h2.56v2.56h-2.56zM15.38 64.10h2.56v2.56h-2.56zM17.95 64.10h2.56v2.56h-2.56zM20.51 64.10h2.56v2.56h-2.56zM25.64 64.10h2.56v2.56h-2.56zM28.21 64.10h2.56v2.56h-2.56zM30.77 64.10h2.56v2.56h-2.56zM35.90 64.10h2.56v2.56h-2.56zM41.03 64.10h2.56v2.56h-2.56zM46.15 64.10h2.56v2.56h-2.56zM53.85 64.10h2.56v2.56h-2.56zM56.41 64.10h2.56v2.56h-2.56zM69.23 64.10h2.56v2.56h-2.56zM79.49 64.10h2.56v2.56h-2.56zM82.05 64.10h2.56v2.56h-2.56zM94.87 64.10h2.56v2.56h-2.56zM0.00 66.67h2.56v2.56h-2.56zM2.56 66.67h2.56v2.56h-2.56zM17.95 66.67h2.56v2.56h-2.56zM23.08 66.67h2.56v2.56h-2.56zM25.64 66.67h2.56v2.56h-2.56zM28.21 66.67h2.56v2.56h-2.56zM30.77 66.67h2.56v2.56h-2.56zM33.33 66.67h2.56v2.56h-2.56zM35.90 66.67h2.56v2.56h-2.56zM43.59 66.67h2.56v2.56h-2.56zM46.15 66.67h2.56v2.56h-2.56zM48.72 66.67h2.56v2.56h-2.56zM51.28 66.67h2.56v2.56h-2.56zM53.85 66.67h2.56v2.56h-2.56zM66.67 66.67h2.56v2.56h-2.56zM71.79 66.67h2.56v2.56h-2.56zM82.05 66.67h2.56v2.56h-2.56zM87.18 66.67h2.56v2.56h-2.56zM94.87 66.67h2.56v2.56h-2.56zM97.44 66.67h2.56v2.56h-2.56zM0.00 69.23h2.56v2.56h-2.56zM2.56 69.23h2.56v2.56h-2.56zM5.13 69.23h2.56v2.56h-2.56zM12.82 69.23h2.56v2.56h-2.56zM15.38 69.23h2.56v2.56h-2.56zM20.51 69.23h2.56v2.56h-2.56zM23.08 69.23h2.56v2.56h-2.56zM28.21 69.23h2.56v2.56h-2.56zM30.77 69.23h2.56v2.56h-2.56zM38.46 69.23h2.56v2.56h-2.56zM41.03 69.23h2.56v2.56h-2.56zM43.59 69.23h2.56v2.56h-2.56zM51.28 69.23h2.56v2.56h-2.56zM56.41 69.23h2.56v2.56h-2.56zM58.97 69.23h2.56v2.56h-2.56zM61.54 69.23h2.56v2.56h-2.56zM69.23 69.23h2.56v2.56h-2.56zM74.36 69.23h2.56v2.56h-2.56zM79.49 69.23h2.56v2.56h-2.56zM82.05 69.23h2.56v2.56h-2.56zM87.18 69.23h2.56v2.56h-2.56zM97.44 69.23h2.56v2.56h-2.56zM5.13 71.79h2.56v2.56h-2.56zM7.69 71.79h2.56v2.56h-2.56zM10.26 71.79h2.56v2.56h-2.56zM12.82 71.79h2.56v2.56h-2.56zM17.95 71.79h2.56v2.56h-2.56zM20.51 71.79h2.56v2.56h-2.56zM23.08 71.79h2.56v2.56h-2.56zM30.77 71.79h2.56v2.56h-2.56zM41.03 71.79h2.56v2.56h-2.56zM43.59 71.79h2.56v2.56h-2.56zM51.28 71.79h2.56v2.56h-2.56zM56.41 71.79h2.56v2.56h-2.56zM61.54 71.79h2.56v2.56h-2.56zM69.23 71.79h2.56v2.56h-2.56zM71.79 71.79h2.56v2.56h-2.56zM74.36 71.79h2.56v2.56h-2.56zM76.92 71.79h2.56v2.56h-2.56zM79.49 71.79h2.56v2.56h-2.56zM82.05 71.79h2.56v2.56h-2.56zM84.62 71.79h2.56v2.56h-2.56zM89.74 71.79h2.56v2.56h-2.56zM92.31 71.79h2.56v2.56h-2.56zM97.44 71.79h2.56v2.56h-2.56zM5.13 74.36h2.56v2.56h-2.56zM7.69 74.36h2.56v2.56h-2.56zM12.82 74.36h2.56v2.56h-2.56zM17.95 74.36h2.56v2.56h-2.56zM20.51 74.36h2.56v2.56h-2.56zM28.21 74.36h2.56v2.56h-2.56zM35.90 74.36h2.56v2.56h-2.56zM38.46 74.36h2.56v2.56h-2.56zM51.28 74.36h2.56v2.56h-2.56zM56.41 74.36h2.56v2.56h-2.56zM61.54 74.36h2.56v2.56h-2.56zM64.10 74.36h2.56v2.56h-2.56zM71.79 74.36h2.56v2.56h-2.56zM82.05 74.36h2.56v2.56h-2.56zM84.62 74.36h2.56v2.56h-2.56zM87.18 74.36h2.56v2.56h-2.56zM0.00 76.92h2.56v2.56h-2.56zM2.56 76.92h2.56v2.56h-2.56zM5.13 76.92h2.56v2.56h-2.56zM7.69 76.92h2.56v2.56h-2.56zM10.26 76.92h2.56v2.56h-2.56zM12.82 76.92h2.56v2.56h-2.56zM15.38 76.92h2.56v2.56h-2.56zM20.51 76.92h2.56v2.56h-2.56zM33.33 76.92h2.56v2.56h-2.56zM35.90 76.92h2.56v2.56h-2.56zM38.46 76.92h2.56v2.56h-2.56zM41.03 76.92h2.56v2.56h-2.56zM43.59 76.92h2.56v2.56h-2.56zM51.28 76.92h2.56v2.56h-2.56zM56.41 76.92h2.56v2.56h-2.56zM61.54 76.92h2.56v2.56h-2.56zM64.10 76.92h2.56v2.56h-2.56zM66.67 76.92h2.56v2.56h-2.56zM71.79 76.92h2.56v2.56h-2.56zM76.92 76.92h2.56v2.56h-2.56zM82.05 76.92h2.56v2.56h-2.56zM84.62 76.92h2.56v2.56h-2.56zM89.74 76.92h2.56v2.56h-2.56zM92.31 76.92h2.56v2.56h-2.56zM20.51 79.49h2.56v2.56h-2.56zM23.08 79.49h2.56v2.56h-2.56zM25.64 79.49h2.56v2.56h-2.56zM28.21 79.49h2.56v2.56h-2.56zM38.46 79.49h2.56v2.56h-2.56zM41.03 79.49h2.56v2.56h-2.56zM46.15 79.49h2.56v2.56h-2.56zM48.72 79.49h2.56v2.56h-2.56zM53.85 79.49h2.56v2.56h-2.56zM56.41 79.49h2.56v2.56h-2.56zM64.10 79.49h2.56v2.56h-2.56zM66.67 79.49h2.56v2.56h-2.56zM71.79 79.49h2.56v2.56h-2.56zM82.05 79.49h2.56v2.56h-2.56zM87.18 79.49h2.56v2.56h-2.56zM89.74 79.49h2.56v2.56h-2.56zM94.87 79.49h2.56v2.56h-2.56zM0.00 82.05h2.56v2.56h-2.56zM2.56 82.05h2.56v2.56h-2.56zM5.13 82.05h2.56v2.56h-2.56zM7.69 82.05h2.56v2.56h-2.56zM10.26 82.05h2.56v2.56h-2.56zM12.82 82.05h2.56v2.56h-2.56zM15.38 82.05h2.56v2.56h-2.56zM20.51 82.05h2.56v2.56h-2.56zM23.08 82.05h2.56v2.56h-2.56zM33.33 82.05h2.56v2.56h-2.56zM35.90 82.05h2.56v2.56h-2.56zM38.46 82.05h2.56v2.56h-2.56zM43.59 82.05h2.56v2.56h-2.56zM46.15 82.05h2.56v2.56h-2.56zM48.72 82.05h2.56v2.56h-2.56zM51.28 82.05h2.56v2.56h-2.56zM53.85 82.05h2.56v2.56h-2.56zM56.41 82.05h2.56v2.56h-2.56zM64.10 82.05h2.56v2.56h-2.56zM66.67 82.05h2.56v2.56h-2.56zM69.23 82.05h2.56v2.56h-2.56zM71.79 82.05h2.56v2.56h-2.56zM74.36 82.05h2.56v2.56h-2.56zM76.92 82.05h2.56v2.56h-2.56zM79.49 82.05h2.56v2.56h-2.56zM82.05 82.05h2.56v2.56h-2.56zM84.62 82.05h2.56v2.56h-2.56zM87.18 82.05h2.56v2.56h-2.56zM89.74 82.05h2.56v2.56h-2.56zM92.31 82.05h2.56v2.56h-2.56zM97.44 82.05h2.56v2.56h-2.56zM0.00 84.62h2.56v2.56h-2.56zM15.38 84.62h2.56v2.56h-2.56zM20.51 84.62h2.56v2.56h-2.56zM23.08 84.62h2.56v2.56h-2.56zM25.64 84.62h2.56v2.56h-2.56zM30.77 84.62h2.56v2.56h-2.56zM35.90 84.62h2.56v2.56h-2.56zM43.59 84.62h2.56v2.56h-2.56zM46.15 84.62h2.56v2.56h-2.56zM48.72 84.62h2.56v2.56h-2.56zM53.85 84.62h2.56v2.56h-2.56zM56.41 84.62h2.56v2.56h-2.56zM61.54 84.62h2.56v2.56h-2.56zM64.10 84.62h2.56v2.56h-2.56zM66.67 84.62h2.56v2.56h-2.56zM69.23 84.62h2.56v2.56h-2.56zM71.79 84.62h2.56v2.56h-2.56zM74.36 84.62h2.56v2.56h-2.56zM87.18 84.62h2.56v2.56h-2.56zM94.87 84.62h2.56v2.56h-2.56zM0.00 87.18h2.56v2.56h-2.56zM5.13 87.18h2.56v2.56h-2.56zM7.69 87.18h2.56v2.56h-2.56zM10.26 87.18h2.56v2.56h-2.56zM15.38 87.18h2.56v2.56h-2.56zM20.51 87.18h2.56v2.56h-2.56zM23.08 87.18h2.56v2.56h-2.56zM25.64 87.18h2.56v2.56h-2.56zM28.21 87.18h2.56v2.56h-2.56zM30.77 87.18h2.56v2.56h-2.56zM33.33 87.18h2.56v2.56h-2.56zM35.90 87.18h2.56v2.56h-2.56zM38.46 87.18h2.56v2.56h-2.56zM41.03 87.18h2.56v2.56h-2.56zM46.15 87.18h2.56v2.56h-2.56zM48.72 87.18h2.56v2.56h-2.56zM51.28 87.18h2.56v2.56h-2.56zM53.85 87.18h2.56v2.56h-2.56zM56.41 87.18h2.56v2.56h-2.56zM69.23 87.18h2.56v2.56h-2.56zM71.79 87.18h2.56v2.56h-2.56zM74.36 87.18h2.56v2.56h-2.56zM76.92 87.18h2.56v2.56h-2.56zM79.49 87.18h2.56v2.56h-2.56zM82.05 87.18h2.56v2.56h-2.56zM84.62 87.18h2.56v2.56h-2.56zM89.74 87.18h2.56v2.56h-2.56zM92.31 87.18h2.56v2.56h-2.56zM94.87 87.18h2.56v2.56h-2.56zM97.44 87.18h2.56v2.56h-2.56zM0.00 89.74h2.56v2.56h-2.56zM5.13 89.74h2.56v2.56h-2.56zM7.69 89.74h2.56v2.56h-2.56zM10.26 89.74h2.56v2.56h-2.56zM15.38 89.74h2.56v2.56h-2.56zM23.08 89.74h2.56v2.56h-2.56zM38.46 89.74h2.56v2.56h-2.56zM41.03 89.74h2.56v2.56h-2.56zM43.59 89.74h2.56v2.56h-2.56zM51.28 89.74h2.56v2.56h-2.56zM56.41 89.74h2.56v2.56h-2.56zM58.97 89.74h2.56v2.56h-2.56zM61.54 89.74h2.56v2.56h-2.56zM64.10 89.74h2.56v2.56h-2.56zM66.67 89.74h2.56v2.56h-2.56zM71.79 89.74h2.56v2.56h-2.56zM74.36 89.74h2.56v2.56h-2.56zM76.92 89.74h2.56v2.56h-2.56zM82.05 89.74h2.56v2.56h-2.56zM84.62 89.74h2.56v2.56h-2.56zM89.74 89.74h2.56v2.56h-2.56zM92.31 89.74h2.56v2.56h-2.56zM94.87 89.74h2.56v2.56h-2.56zM0.00 92.31h2.56v2.56h-2.56zM5.13 92.31h2.56v2.56h-2.56zM7.69 92.31h2.56v2.56h-2.56zM10.26 92.31h2.56v2.56h-2.56zM15.38 92.31h2.56v2.56h-2.56zM20.51 92.31h2.56v2.56h-2.56zM35.90 92.31h2.56v2.56h-2.56zM41.03 92.31h2.56v2.56h-2.56zM46.15 92.31h2.56v2.56h-2.56zM48.72 92.31h2.56v2.56h-2.56zM56.41 92.31h2.56v2.56h-2.56zM58.97 92.31h2.56v2.56h-2.56zM61.54 92.31h2.56v2.56h-2.56zM64.10 92.31h2.56v2.56h-2.56zM66.67 92.31h2.56v2.56h-2.56zM69.23 92.31h2.56v2.56h-2.56zM71.79 92.31h2.56v2.56h-2.56zM74.36 92.31h2.56v2.56h-2.56zM76.92 92.31h2.56v2.56h-2.56zM82.05 92.31h2.56v2.56h-2.56zM84.62 92.31h2.56v2.56h-2.56zM89.74 92.31h2.56v2.56h-2.56zM92.31 92.31h2.56v2.56h-2.56zM0.00 94.87h2.56v2.56h-2.56zM15.38 94.87h2.56v2.56h-2.56zM20.51 94.87h2.56v2.56h-2.56zM23.08 94.87h2.56v2.56h-2.56zM35.90 94.87h2.56v2.56h-2.56zM48.72 94.87h2.56v2.56h-2.56zM51.28 94.87h2.56v2.56h-2.56zM56.41 94.87h2.56v2.56h-2.56zM58.97 94.87h2.56v2.56h-2.56zM61.54 94.87h2.56v2.56h-2.56zM71.79 94.87h2.56v2.56h-2.56zM76.92 94.87h2.56v2.56h-2.56zM82.05 94.87h2.56v2.56h-2.56zM89.74 94.87h2.56v2.56h-2.56zM94.87 94.87h2.56v2.56h-2.56zM97.44 94.87h2.56v2.56h-2.56zM0.00 97.44h2.56v2.56h-2.56zM2.56 97.44h2.56v2.56h-2.56zM5.13 97.44h2.56v2.56h-2.56zM7.69 97.44h2.56v2.56h-2.56zM10.26 97.44h2.56v2.56h-2.56zM12.82 97.44h2.56v2.56h-2.56zM15.38 97.44h2.56v2.56h-2.56zM20.51 97.44h2.56v2.56h-2.56zM23.08 97.44h2.56v2.56h-2.56zM30.77 97.44h2.56v2.56h-2.56zM33.33 97.44h2.56v2.56h-2.56zM43.59 97.44h2.56v2.56h-2.56zM53.85 97.44h2.56v2.56h-2.56zM56.41 97.44h2.56v2.56h-2.56zM58.97 97.44h2.56v2.56h-2.56zM64.10 97.44h2.56v2.56h-2.56zM66.67 97.44h2.56v2.56h-2.56zM69.23 97.44h2.56v2.56h-2.56zM71.79 97.44h2.56v2.56h-2.56zM74.36 97.44h2.56v2.56h-2.56zM79.49 97.44h2.56v2.56h-2.56zM84.62 97.44h2.56v2.56h-2.56zM87.18 97.44h2.56v2.56h-2.56zM89.74 97.44h2.56v2.56h-2.56zM92.31 97.44h2.56v2.56h-2.56zM94.87 97.44h2.56v2.56h-2.56zM97.44 97.44h2.56v2.56h-2.56z" fill="url(#qg)"/>
 <rect x="37" y="37" width="26" height="26" rx="5" fill="#fff" shape-rendering="auto"/>
 <circle cx="51.5" cy="44" r="2.6" fill="#2f7be8" shape-rendering="auto"/><circle cx="46" cy="48.5" r="2" fill="#1ec2f0" shape-rendering="auto"/><circle cx="51.5" cy="53.5" r="2.1" fill="#19b8a8" shape-rendering="auto"/><circle cx="55.5" cy="58" r="1.1" fill="#9099f5" shape-rendering="auto"/>
</svg>
 <div class="a" style="left:0;top:162px;width:246px;text-align:center;font-size:13px;line-height:18px;color:#222">金蝶云APP</div>
 <div class="a" style="left:0;top:184px;width:246px;text-align:center;font-size:12px;line-height:16px;color:#555">一站式企业管理云服务平台</div>
</div>
<div class="card" style="left:1829px;top:92px;width:40px;height:119px">
 <svg class="a" style="left:9px;top:11px" width="20" height="19" viewBox="0 0 20 19" fill="none" stroke="#777" stroke-width="1.1"><rect x="1" y="1" width="7" height="7"/><rect x="1" y="11" width="7" height="7"/><rect x="11" y="1" width="7" height="7"/><path d="M11 18l7-7M13 11h5v0"/></svg>
 <svg class="a" style="left:8px;top:48px" width="24" height="24" viewBox="0 0 24 24" fill="none" stroke="#777" stroke-width="1.2"><path d="M2.5 10A9.5 9.5 0 0 1 20 7"/><path d="M21.5 14A9.5 9.5 0 0 1 4 17"/><path d="M1 20l3-3 3 3"/></svg>
 <svg class="a" style="left:8px;top:88px" width="24" height="24" viewBox="0 0 24 24" fill="none" stroke="#777" stroke-width="1.2"><circle cx="12" cy="12" r="10"/><path d="M6 10h14l-4-3M20 14H6l4 3"/></svg>
</div>
</body></html>
